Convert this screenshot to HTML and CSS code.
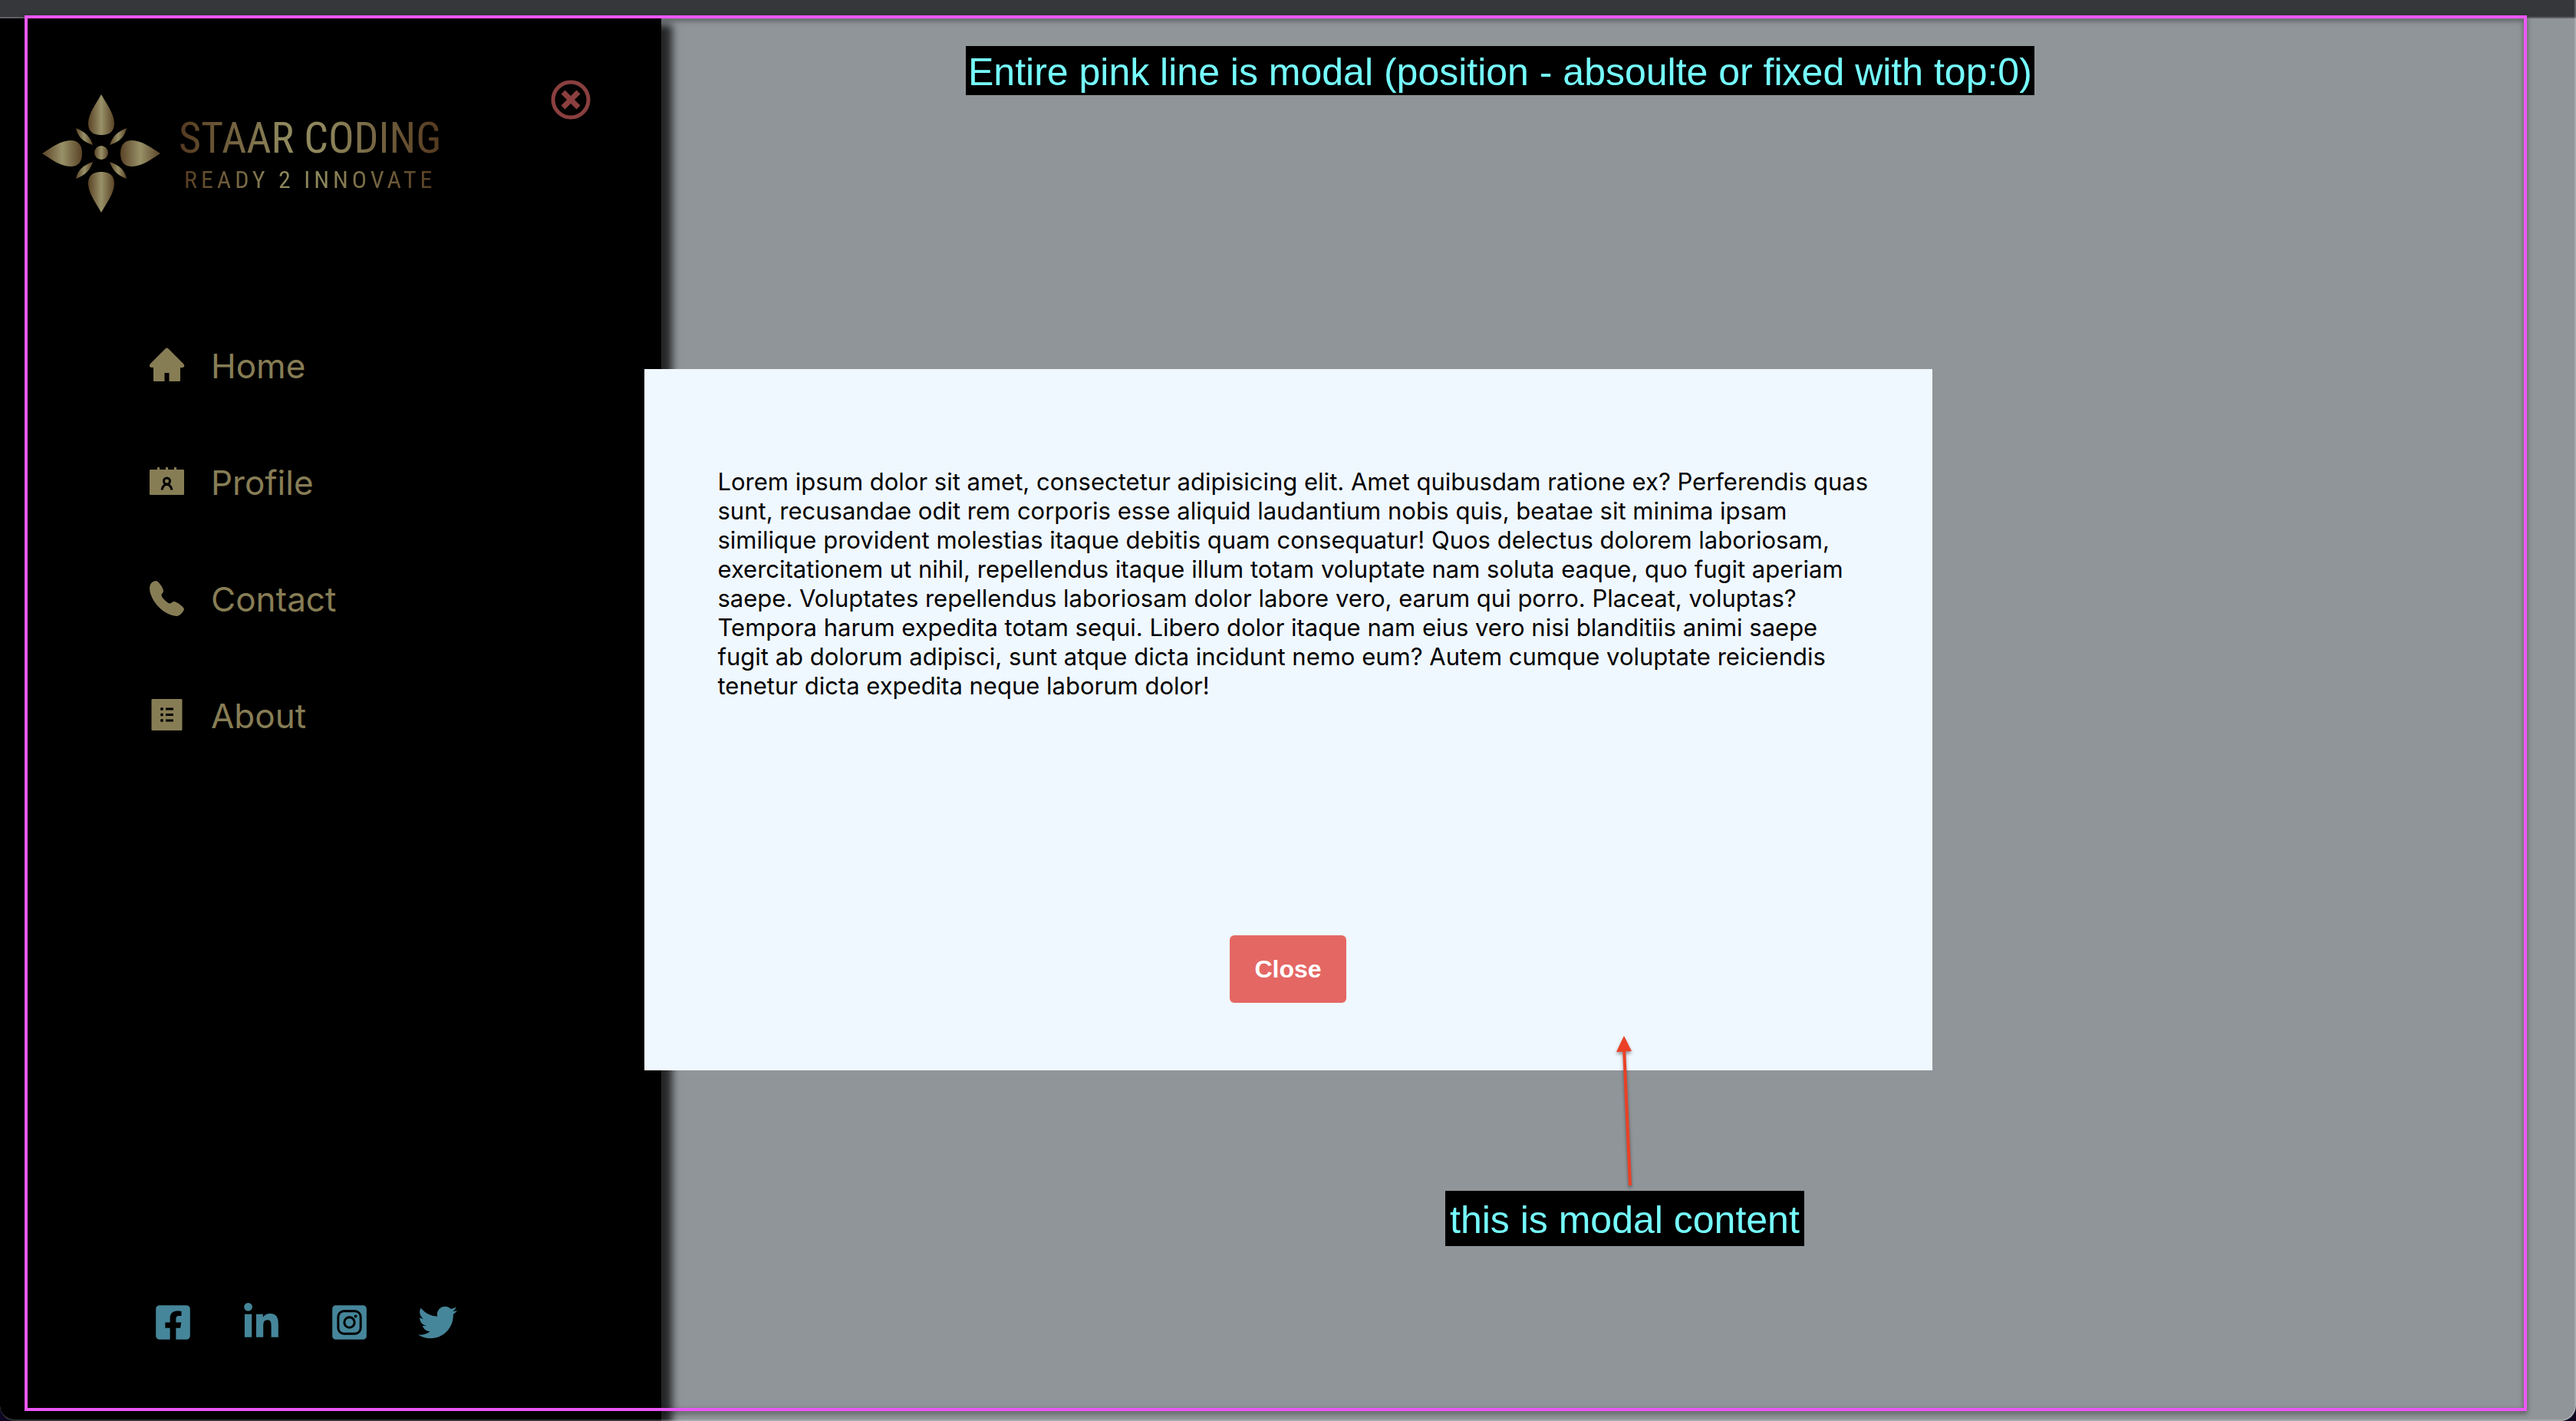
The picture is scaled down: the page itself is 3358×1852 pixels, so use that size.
FILE: index.html
```html
<!DOCTYPE html>
<html lang="en">
<head>
<meta charset="utf-8">
<meta name="viewport" content="width=device-width, initial-scale=1">
<title>Staar Coding</title>
<link rel="stylesheet" href="styles.css">
</head>
<body>
<div class="window">
  <div class="titlebar"></div>
  <div class="page">
    <aside class="sidebar">
      <header class="sidebar-header">
        <a class="logo" href="#">
          <svg class="logo-mark" viewBox="0 0 154 154" aria-hidden="true">
            <defs>
              <linearGradient id="gold">
                <stop offset="0" stop-color="#5a4326"/>
                <stop offset=".5" stop-color="#989168"/>
                <stop offset="1" stop-color="#5a4326"/>
              </linearGradient>
            </defs>
            <g fill="url(#gold)">
              <path d="M77 0C84 13 94 25 94 38C94 48 88 53 77 53C66 53 60 48 60 38C60 25 70 13 77 0Z"/>
              <path d="M77 154C84 141 94 129 94 116C94 106 88 101 77 101C66 101 60 106 60 116C60 129 70 141 77 154Z"/>
              <path d="M0 77C11 70 24 60 37 60C47 60 52 66 52 77C52 88 47 94 37 94C24 94 11 84 0 77Z"/>
              <path d="M154 77C143 70 130 60 117 60C107 60 102 66 102 77C102 88 107 94 117 94C130 94 143 84 154 77Z"/>
              <circle cx="77" cy="76" r="9"/>
              <path d="M110 44Q107 60 88 66Q93 50 110 44Z"/>
              <path d="M44 44Q47 60 66 66Q61 50 44 44Z"/>
              <path d="M110 110Q107 94 88 88Q93 104 110 110Z"/>
              <path d="M44 110Q47 94 66 88Q61 104 44 110Z"/>
            </g>
          </svg>
          <span class="logo-text">
            <span class="logo-name">STAAR CODING</span>
            <span class="logo-tagline">READY 2 INNOVATE</span>
          </span>
        </a>
        <button class="sidebar-close" type="button" aria-label="Close menu">
          <svg viewBox="0 0 52 52" aria-hidden="true">
            <circle cx="26" cy="26" r="23" fill="none" stroke="currentColor" stroke-width="5"/>
            <path d="M16 16L36 36M36 16L16 36" fill="none" stroke="currentColor" stroke-width="7"/>
          </svg>
        </button>
      </header>

      <nav class="menu">
        <a class="menu-link" href="#">
          <svg class="menu-icon" viewBox="0 0 46 46" aria-hidden="true"><path d="M20.500 .5Q22.500-1.500 24.500 .5L44 20Q46 22 45 24Q44 25.500 40 25V42Q40 43 39 43H25.500V32H19.500V43H6Q5 43 5 42V25Q1 25.500 0 23.500Q-.5 21.500 1 20Z"/></svg>
          Home
        </a>
        <a class="menu-link" href="#">
          <svg class="menu-icon" viewBox="0 0 46 46" aria-hidden="true">
            <path d="M10 3H13V6H21V3H24V6H32V3H35V6H44Q45 6 45 7V38Q45 39 44 39H1Q0 39 0 38V7Q0 6 1 6H10Z"/>
            <g fill="none" stroke="#000" stroke-width="3"><circle cx="22.500" cy="21" r="4"/><path d="M16 32.500C17 28 19 25.500 22.500 25.500S28 28 29 32.500"/></g>
          </svg>
          Profile
        </a>
        <a class="menu-link" href="#">
          <svg class="menu-icon" viewBox="0 0 46 46" aria-hidden="true"><path d="M8-1C3 0 0 3 0 9C1 26 19 44 35 45C39 45 44 40 45 36C45 33 35 26 32 26C29 26 28 29 26 28.500C22 27 16 21 15.500 18C15 16 18 15 18 12C18 9 12-1 8-1Z"/></svg>
          Contact
        </a>
        <a class="menu-link" href="#">
          <svg class="menu-icon" viewBox="0 0 46 46" aria-hidden="true">
            <rect x="2.500" y="1" width="40" height="41" rx="1"/>
            <g fill="#000"><circle cx="16" cy="14" r="2"/><circle cx="16" cy="21.500" r="2"/><circle cx="16" cy="29" r="2"/><path d="M21 12.500H31V15.500H21ZM21 20H31V23H21ZM21 27.500H31V30.500H21Z"/></g>
          </svg>
          About
        </a>
      </nav>

      <div class="social">
        <a href="#" aria-label="Facebook"><svg viewBox="-32 0 512 512" aria-hidden="true"><path d="M400 32H48A48 48 0 0 0 0 80v352a48 48 0 0 0 48 48h137.250V327.690h-63V256h63v-54.640c0-62.150 37-96.480 93.670-96.480 27.140 0 55.520 4.840 55.520 4.840v61h-31.270c-30.810 0-40.420 19.120-40.420 38.730V256h68.780l-11 71.690h-57.780V480H400a48 48 0 0 0 48-48V80a48 48 0 0 0-48-48z"/></svg></a>
        <a href="#" aria-label="LinkedIn"><svg viewBox="-32 0 512 512" aria-hidden="true"><path d="M100.280 448H7.400V148.900h92.880zM53.790 108.100C24.090 108.100 0 83.500 0 53.800a53.790 53.790 0 0 1 107.580 0c0 29.700-24.100 54.300-53.790 54.300zM447.900 448h-92.680V302.400c0-34.700-.7-79.200-48.290-79.200-48.290 0-55.690 37.700-55.690 76.700V448h-92.780V148.900h89.080v40.800h1.300c12.400-23.500 42.690-48.300 87.880-48.300 94 0 111.280 61.900 111.280 142.300V448z"/></svg></a>
        <a href="#" aria-label="Instagram"><svg viewBox="-32 0 512 512" aria-hidden="true"><rect y="32" width="448" height="448" rx="46"/><g fill="none" stroke="#000" stroke-width="30"><rect x="77" y="109" width="294" height="294" rx="74"/><circle cx="224" cy="256" r="67"/></g><circle cx="305" cy="175" r="20" fill="#000"/></svg></a>
        <a href="#" aria-label="Twitter"><svg viewBox="0 0 512 512" aria-hidden="true"><path d="M459.370 151.716c.325 4.548.325 9.097.325 13.645 0 138.720-105.583 298.558-298.558 298.558-59.452 0-114.680-17.219-161.137-47.106 8.447.974 16.568 1.299 25.340 1.299 49.055 0 94.213-16.568 130.274-44.832-46.132-.975-84.792-31.188-98.112-72.772 6.498.974 12.995 1.624 19.818 1.624 9.421 0 18.843-1.300 27.614-3.573-48.081-9.747-84.143-51.980-84.143-102.985v-1.299c13.969 7.797 30.214 12.670 47.431 13.319-28.264-18.843-46.781-51.005-46.781-87.391 0-19.492 5.197-37.360 14.294-52.954 51.655 63.675 129.300 105.258 216.365 109.807-1.624-7.797-2.599-15.918-2.599-24.040 0-57.828 46.782-104.934 104.934-104.934 30.213 0 57.502 12.670 76.670 33.137 23.715-4.548 46.456-13.320 66.599-25.340-7.798 24.366-24.366 44.833-46.132 57.827 21.117-2.273 41.584-8.122 60.426-16.243-14.292 20.791-32.161 39.308-52.628 54.253z"/></svg></a>
      </div>
    </aside>

    <div class="modal">
      <section class="modal-content" role="dialog" aria-modal="true" aria-label="Modal">
        <p class="modal-text">Lorem ipsum dolor sit amet, consectetur adipisicing elit. Amet quibusdam ratione ex? Perferendis quas<br>
          sunt, recusandae odit rem corporis esse aliquid laudantium nobis quis, beatae sit minima ipsam<br>
          similique provident molestias itaque debitis quam consequatur! Quos delectus dolorem laboriosam,<br>
          exercitationem ut nihil, repellendus itaque illum totam voluptate nam soluta eaque, quo fugit aperiam<br>
          saepe. Voluptates repellendus laboriosam dolor labore vero, earum qui porro. Placeat, voluptas?<br>
          Tempora harum expedita totam sequi. Libero dolor itaque nam eius vero nisi blanditiis animi saepe<br>
          fugit ab dolorum adipisci, sunt atque dicta incidunt nemo eum? Autem cumque voluptate reiciendis<br>
          tenetur dicta expedita neque laborum dolor!</p>
        <button class="modal-close" type="button">Close</button>
      </section>
    </div>
  </div>

  <div class="frame"></div>
  <div class="note note-modal">Entire pink line is modal (position - absoulte or fixed with top:0)</div>
  <div class="note note-content">this is modal content</div>
  <svg class="arrow" viewBox="0 0 40 210" aria-hidden="true">
    <path d="M17 20L25 200" stroke="#eb4025" stroke-width="4"/>
    <path d="M17 5L27 25L7 26Z" fill="#eb4025"/>
  </svg>
</div>
</body>
</html>
```
FILE: styles.css
```css
* {
  box-sizing: border-box;
}

body {
  margin: 0;
  background: #0e0520;
  font-family: Inter, "Liberation Sans", sans-serif;
}

button {
  border: 0;
  padding: 0;
  background: none;
}

svg {
  display: block;
  overflow: visible;
}

/* Browser window */
.window {
  position: relative;
  display: flex;
  flex-direction: column;
  min-height: 100vh;
  overflow: hidden;
  border-radius: 0 0 20px 20px;
}

.window::after {
  content: "";
  position: absolute;
  inset: 0;
  border: solid rgba(255, 255, 255, 0.2);
  border-width: 0 2px 2px 0;
  border-radius: 0 0 20px 20px;
  pointer-events: none;
}

.titlebar {
  height: 24px;
  background: #36373b;
  border-bottom: 2px solid #5f6063;
}

.page {
  position: relative;
  display: flex;
  flex: 1;
  overflow: hidden;
  background: #909599;
}

/* Sidebar */
.sidebar {
  display: flex;
  flex-direction: column;
  width: 862px;
  padding: 80px 92px 103px 55px;
  background: #000;
  box-shadow: 14px 8px 10px rgba(0, 0, 0, 0.75);
}

.sidebar-header {
  display: flex;
  align-items: flex-start;
  justify-content: space-between;
}

.logo {
  display: flex;
  align-items: center;
  gap: 24px;
  padding-top: 19px;
  text-decoration: none;
}

.logo-mark {
  width: 154px;
  height: 154px;
}

.logo-text {
  display: flex;
  flex-direction: column;
  align-items: center;
  font-family: "Roboto Condensed", Roboto, sans-serif;
  color: transparent;
  background: linear-gradient(90deg, #54391f, #8f885d 40%, #8f885d 55%, #54391f);
  -webkit-background-clip: text;
  background-clip: text;
}

.logo-name {
  font-size: 56px;
  line-height: 68px;
}

.logo-tagline {
  font-size: 32px;
  line-height: 40px;
  letter-spacing: 5px;
}

.sidebar-close {
  width: 52px;
  height: 52px;
  color: #8b3f3f;
}

.menu {
  display: flex;
  flex-direction: column;
  gap: 96px;
  margin: 172px 0 0 140px;
}

.menu-link {
  display: flex;
  align-items: center;
  gap: 34px;
  font-size: 44px;
  line-height: 56px;
  color: #877d55;
  text-decoration: none;
}

.menu-icon {
  width: 46px;
  height: 46px;
  fill: currentColor;
}

.social {
  display: flex;
  gap: 64px;
  margin: auto 0 0 145px;
  fill: #46869a;
}

.social svg {
  width: 51px;
  height: 51px;
}

/* Modal */
.modal {
  position: absolute;
  inset: 0;
  display: flex;
  align-items: center;
  justify-content: center;
}

.modal-content {
  display: flex;
  flex-direction: column;
  align-items: center;
  justify-content: space-between;
  width: 50%;
  min-height: 50%;
  padding: 128px 80px 88px 96px;
  background: #f0f8ff;
}

.modal-text {
  align-self: stretch;
  margin: 0;
  font-size: 31px;
  line-height: 38px;
  color: #000;
}

.modal-close {
  padding: 24px 32px;
  margin-right: 16px;
  border-radius: 6px;
  background: #e46764;
  color: #fff;
  font: bold 32px/40px "Liberation Sans", sans-serif;
}

/* Annotations drawn over the window */
.frame {
  position: absolute;
  inset: 20px 64px 13px 32px;
  border: 4px solid #ec57f6;
  filter: drop-shadow(0 3px 3px rgba(0, 0, 0, 0.5));
  pointer-events: none;
}

.note {
  position: absolute;
  background: #000;
  color: #75fbfd;
  font-family: "Liberation Sans", Arial, sans-serif;
  font-size: 50px;
  white-space: nowrap;
}

.note-modal {
  top: 60px;
  left: 1259px;
  padding: 4px 3px 0;
  line-height: 60px;
}

.note-content {
  top: 1552px;
  left: 1884px;
  padding: 4px 6px 0;
  line-height: 68px;
}

.arrow {
  position: absolute;
  top: 1345px;
  left: 2100px;
  width: 40px;
  height: 210px;
  filter: drop-shadow(0 3px 2px rgba(0, 0, 0, 0.4));
}
```
